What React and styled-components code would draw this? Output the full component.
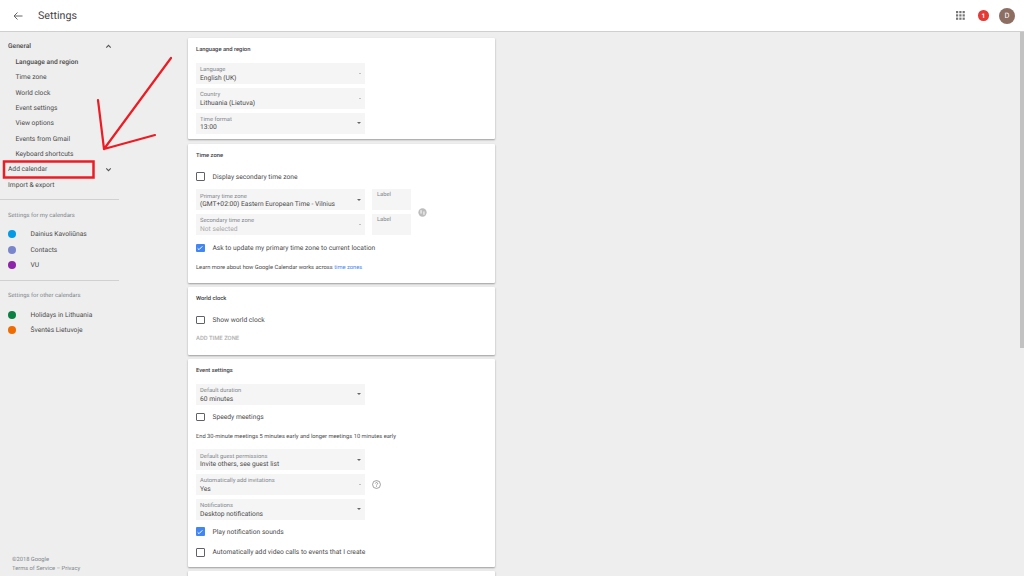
import React from "react";
import styled, { createGlobalStyle } from "styled-components";

const GlobalStyle = createGlobalStyle`
  html, body {
    margin: 0;
    height: 100%;
    overflow: hidden;
    background: #eeeeee;
    font-family: Roboto, "Liberation Sans", sans-serif;
    color: #4a4a4a;
    text-rendering: geometricPrecision;
    -webkit-font-smoothing: antialiased;
  }
`;

const myCalendars = [
  { name: "Dainius Kavoliūnas", color: "#039be5" },
  { name: "Contacts", color: "#7986cb" },
  { name: "VU", color: "#8e24aa" },
];

const otherCalendars = [
  { name: "Holidays in Lithuania", color: "#0b8043" },
  { name: "Šventės Lietuvoje", color: "#ef6c00" },
];

const generalLinks = [
  "Language and region",
  "Time zone",
  "World clock",
  "Event settings",
  "View options",
  "Events from Gmail",
  "Keyboard shortcuts",
];

const Chevron = ({ up }) => (
  <svg width="9" height="9" viewBox="0 0 24 24" fill="none" stroke="#555" strokeWidth="3">
    <path d={up ? "M6 15l6-6 6 6" : "M6 9l6 6 6-6"} />
  </svg>
);

const Dropdown = ({ label, value, disabled, small }) => (
  <SelectBox $disabled={disabled}>
    <div>
      <SelectLabel>{label}</SelectLabel>
      <SelectValue>{value}</SelectValue>
    </div>
    <Caret $small={small} />
  </SelectBox>
);

const Check = ({ checked, label }) => (
  <CheckRow>
    <CheckBox $checked={checked}>
      {checked && (
        <svg width="8" height="8" viewBox="0 0 24 24" fill="none" stroke="#fff" strokeWidth="3">
          <path d="M5 13l4 4 10-10" />
        </svg>
      )}
    </CheckBox>
    <span>{label}</span>
  </CheckRow>
);

const App = () => {
  return (
    <Page>
      <GlobalStyle />
      <Header>
        <svg width="12" height="12" viewBox="0 0 24 24" fill="none" stroke="#666" strokeWidth="2">
          <path d="M21 12H4M11 5l-7 7 7 7" />
        </svg>
        <HeaderTitle>Settings</HeaderTitle>
        <HeaderRight>
          <svg width="9" height="9" viewBox="0 0 9 9" fill="#757575">
            {[0, 3.3, 6.6].map((y) =>
              [0, 3.3, 6.6].map((x) => <rect key={`${x}-${y}`} x={x} y={y} width="2.2" height="2.2" />)
            )}
          </svg>
          <Badge>1</Badge>
          <Avatar>D</Avatar>
        </HeaderRight>
      </Header>
      <Body>
        <Sidebar>
          <NavRow $strong>
            General
            <Chevron up />
          </NavRow>
          {generalLinks.map((link, i) => (
            <SubLink key={link} $active={i === 0}>
              {link}
            </SubLink>
          ))}
          <NavRow>
            Add calendar
            <Chevron />
          </NavRow>
          <NavRow>Import &amp; export</NavRow>
          <Divider />
          <SectionLabel>Settings for my calendars</SectionLabel>
          {myCalendars.map((c) => (
            <CalendarRow key={c.name}>
              <Dot $color={c.color} />
              {c.name}
            </CalendarRow>
          ))}
          <Divider />
          <SectionLabel>Settings for other calendars</SectionLabel>
          {otherCalendars.map((c) => (
            <CalendarRow key={c.name}>
              <Dot $color={c.color} />
              {c.name}
            </CalendarRow>
          ))}
          <Footer>
            <div>©2018 Google</div>
            <div>Terms of Service – Privacy</div>
          </Footer>
        </Sidebar>
        <Main>
          <Card>
            <CardTitle>Language and region</CardTitle>
            <Dropdown label="Language" value="English (UK)" small />
            <Dropdown label="Country" value="Lithuania (Lietuva)" small />
            <Dropdown label="Time format" value="13:00" />
          </Card>
          <Card>
            <CardTitle>Time zone</CardTitle>
            <Check label="Display secondary time zone" />
            <ZoneGrid>
              <Dropdown label="Primary time zone" value="(GMT+02:00) Eastern European Time - Vilnius" />
              <LabelBox>Label</LabelBox>
              <SwapIcon>
                <svg width="9" height="9" viewBox="0 0 10 10">
                  <circle cx="5" cy="5" r="4.600" fill="#bdbdbd" />
                  <path d="M3.400 2.400v3.800M6.600 3.800v3.800" stroke="#fff" strokeWidth="1.100" />
                </svg>
              </SwapIcon>
              <Dropdown label="Secondary time zone" value="Not selected" disabled small />
              <LabelBox>Label</LabelBox>
            </ZoneGrid>
            <Check checked label="Ask to update my primary time zone to current location" />
            <Note>
              Learn more about how Google Calendar works across <a>time zones</a>
            </Note>
          </Card>
          <Card>
            <CardTitle>World clock</CardTitle>
            <Check label="Show world clock" />
            <AddZone>ADD TIME ZONE</AddZone>
          </Card>
          <Card>
            <CardTitle>Event settings</CardTitle>
            <Dropdown label="Default duration" value="60 minutes" />
            <Check label="Speedy meetings" />
            <Note>End 30-minute meetings 5 minutes early and longer meetings 10 minutes early</Note>
            <Dropdown label="Default guest permissions" value="Invite others, see guest list" />
            <HelpRow>
              <Dropdown label="Automatically add invitations" value="Yes" small />
              <svg width="9" height="9" viewBox="0 0 24 24" fill="none" stroke="#757575" strokeWidth="1.800">
                <circle cx="12" cy="12" r="10.500" />
                <path d="M9 9.500a3 3 0 1 1 4.600 2.500c-1 .7-1.600 1.300-1.600 2.500M12 16.500v2" />
              </svg>
            </HelpRow>
            <Dropdown label="Notifications" value="Desktop notifications" />
            <Check checked label="Play notification sounds" />
            <Check label="Automatically add video calls to events that I create" />
          </Card>
          <Card />
        </Main>
        <ScrollTrack>
          <ScrollThumb />
        </ScrollTrack>
      </Body>
      <Annotation width="180" height="190" viewBox="0 0 180 190">
        <rect x="4" y="161.500" width="89.500" height="16" fill="none" stroke="#ed1c24" strokeWidth="2.500" />
        <path
          d="M171 58L104 149M98 100L104 149L155 135"
          fill="none"
          stroke="#ed1c24"
          strokeWidth="2.200"
          strokeLinecap="round"
          strokeLinejoin="round"
        />
      </Annotation>
    </Page>
  );
};

export default App;

const Page = styled.div`
  position: relative;
  display: flex;
  flex-direction: column;
  width: 1024px;
  height: 576px;
  overflow: hidden;
`;

const Header = styled.header`
  display: flex;
  align-items: center;
  flex: none;
  box-sizing: border-box;
  height: 32px;
  padding: 0 9px 0 12px;
  background: #fff;
  border-bottom: 1px solid #cfcfcf;
`;

const HeaderTitle = styled.h1`
  margin: 0 0 0 14px;
  font-size: 10.700px;
  font-weight: 400;
  color: #444;
`;

const HeaderRight = styled.div`
  display: flex;
  align-items: center;
  margin-left: auto;
  gap: 13px;
`;

const Badge = styled.span`
  display: flex;
  align-items: center;
  justify-content: center;
  width: 10.500px;
  height: 10.500px;
  margin-right: -2.500px;
  border-radius: 50%;
  background: #e53935;
  color: #fff;
  font-size: 6.500px;
  font-weight: 700;
`;

const Avatar = styled.span`
  display: flex;
  align-items: center;
  justify-content: center;
  width: 16px;
  height: 16px;
  border-radius: 50%;
  background: #8d6e63;
  color: #fff;
  font-size: 7.500px;
`;

const Body = styled.div`
  display: flex;
  flex: 1;
  min-height: 0;
`;

const Sidebar = styled.nav`
  display: flex;
  flex-direction: column;
  flex: none;
  width: 119px;
  padding-top: 6.800px;
  font-size: 6.700px;
`;

const NavRow = styled.div`
  display: flex;
  align-items: center;
  justify-content: space-between;
  height: 15.350px;
  padding: 0 6px 0 8px;
  font-weight: ${(p) => (p.$strong ? 500 : 400)};
`;

const SubLink = styled.div`
  display: flex;
  align-items: center;
  height: 15.350px;
  padding-left: 15.500px;
  font-weight: ${(p) => (p.$active ? 500 : 400)};
`;

const Divider = styled.hr`
  width: 100%;
  height: 1px;
  margin: 7px 0 0;
  border: 0;
  background: #d0d0d0;
`;

const SectionLabel = styled.div`
  padding: 11.500px 0 7px 8px;
  font-size: 5.900px;
  line-height: 8px;
  color: #80868b;
`;

const CalendarRow = styled.div`
  display: flex;
  align-items: center;
  height: 15.400px;
  padding-left: 7.500px;
`;

const Dot = styled.span`
  flex: none;
  width: 8px;
  height: 8px;
  margin-right: 15px;
  border-radius: 50%;
  background: ${(p) => p.$color};
`;

const Footer = styled.footer`
  margin-top: auto;
  padding: 0 0 2px 12px;
  font-size: 5.750px;
  line-height: 9px;
  color: #80868b;
`;

const Main = styled.main`
  display: flex;
  flex-direction: column;
  gap: 4.300px;
  flex: none;
  width: 307px;
  margin-left: 69px;
  padding-top: 6px;
`;

const Card = styled.section`
  flex: none;
  box-sizing: border-box;
  min-height: 40px;
  padding: 8px 8px 2px;
  background: #fff;
  border-radius: 1px;
  box-shadow: 0 1px 2px rgba(0, 0, 0, 0.35);
`;

const CardTitle = styled.h2`
  margin: 0 0 9px;
  font-size: 5.800px;
  line-height: 8px;
  font-weight: 500;
  color: #3c4043;
`;

const SelectBox = styled.div`
  display: flex;
  align-items: center;
  justify-content: space-between;
  box-sizing: border-box;
  width: 169px;
  height: 21px;
  margin-bottom: 3.800px;
  padding: 2.500px 4px 0;
  background: #f5f5f5;
  color: ${(p) => (p.$disabled ? "#a8a8a8" : "inherit")};
`;

const SelectLabel = styled.div`
  font-size: 5.800px;
  line-height: 7.500px;
  color: #80868b;
`;

const SelectValue = styled.div`
  font-size: 6.700px;
  line-height: 7.500px;
`;

const Caret = styled.span`
  width: 0;
  height: 0;
  margin-top: -2.500px;
  border-left: ${(p) => (p.$small ? 1.8 : 2.4)}px solid transparent;
  border-right: ${(p) => (p.$small ? 1.8 : 2.4)}px solid transparent;
  border-top: ${(p) => (p.$small ? 1.8 : 2.4)}px solid ${(p) => (p.$small ? "#8a8a8a" : "#666")};
`;

const CheckRow = styled.label`
  display: flex;
  align-items: center;
  gap: 8px;
  height: 16px;
  margin-bottom: 4.700px;
  font-size: 6.700px;
`;

const CheckBox = styled.span`
  display: flex;
  align-items: center;
  justify-content: center;
  box-sizing: border-box;
  width: 8.500px;
  height: 8.500px;
  border: ${(p) => (p.$checked ? "none" : "1px solid #5f6368")};
  border-radius: 1px;
  background: ${(p) => (p.$checked ? "#4285f4" : "#fff")};
`;

const ZoneGrid = styled.div`
  display: grid;
  grid-template-columns: 169px 39px 22px;
  grid-template-rows: 21px 21px;
  column-gap: 7px;
  row-gap: 3.800px;
  margin-bottom: 5px;
`;

const LabelBox = styled.div`
  box-sizing: border-box;
  height: 21px;
  padding: 3px 5px;
  background: #f5f5f5;
  font-size: 5.800px;
  line-height: 7.500px;
  color: #80868b;
`;

const SwapIcon = styled.div`
  display: flex;
  align-items: center;
  grid-row: 1 / span 2;
  grid-column: 3;
`;

const Note = styled.p`
  margin: 8px 0 7.500px;
  font-size: 5.760px;
  line-height: 9px;

  a {
    color: #4285f4;
  }
`;

const AddZone = styled.div`
  margin: 7.200px 0 8.500px;
  font-size: 5.900px;
  line-height: 9px;
  font-weight: 500;
  color: #b0b0b0;
`;

const HelpRow = styled.div`
  display: flex;
  align-items: flex-start;
  gap: 7px;

  svg {
    margin-top: 6px;
  }
`;

const ScrollTrack = styled.div`
  flex: none;
  width: 4px;
  margin-left: auto;
`;

const ScrollThumb = styled.div`
  width: 4px;
  height: 316px;
  background: #c2c2c2;
`;

const Annotation = styled.svg`
  position: absolute;
  top: 0;
  left: 0;
  pointer-events: none;
`;
